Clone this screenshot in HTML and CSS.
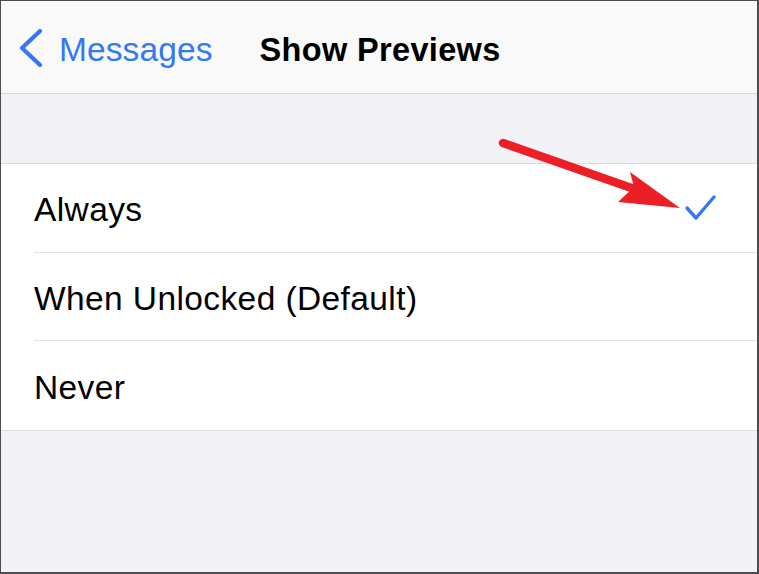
FILE: index.html
```html
<!DOCTYPE html>
<html lang="en">
<head>
<meta charset="utf-8">
<title>Show Previews</title>
<link rel="stylesheet" href="styles.css">
</head>
<body>
<div class="screen">
  <header class="nav">
    <a class="back">
      <svg class="chevron" width="24" height="42" viewBox="0 0 24 42">
        <polyline points="21,3 3,20 21,37" fill="none" stroke="#3478f6" stroke-width="4.2" stroke-linecap="round" stroke-linejoin="round"/>
      </svg>
      <span class="back-label">Messages</span>
    </a>
    <h1 class="title">Show Previews</h1>
  </header>
  <div class="spacer"></div>
  <ul class="list">
    <li class="row"><span class="label">Always</span>
      <svg class="check" width="34" height="30" viewBox="0 0 34 30">
        <polyline points="4,14 13,24 31,3" fill="none" stroke="#3478f6" stroke-width="3.4" stroke-linecap="round" stroke-linejoin="round"/>
      </svg>
    </li>
    <li class="row"><span class="label">When Unlocked (Default)</span></li>
    <li class="row"><span class="label">Never</span></li>
  </ul>
  <div class="footer"></div>
  <svg class="arrow" width="759" height="574" viewBox="0 0 759 574">
    <line x1="503" y1="143" x2="640" y2="191" stroke="#ec1f27" stroke-width="8.5" stroke-linecap="round"/>
    <polygon points="630,172 680,208 618,202 634,187" fill="#ec1f27"/>
  </svg>
</div>
</body>
</html>
```
FILE: styles.css
```css
* { box-sizing: border-box; }
html, body { margin: 0; padding: 0; }
body {
  width: 759px;
  height: 574px;
  overflow: hidden;
  font-family: "Liberation Sans", Arial, sans-serif;
  background: #f2f2f7;
}
.screen {
  position: relative;
  width: 759px;
  height: 574px;
  border-style: solid;
  border-color: #4d4d4f;
  border-width: 1px 2px 2px 1px;
  background: #f2f2f7;
  display: flex;
  flex-direction: column;
}
.nav {
  height: 93px;
  flex: none;
  background: #f9f9f9;
  border-bottom: 1.5px solid #d6d6da;
  display: flex;
  align-items: center;
  padding: 6px 0 0 18px;
}
.back {
  display: flex;
  align-items: center;
  gap: 16px;
  color: #3478f6;
}
.chevron { display: block; margin-top: -3px; }
.back-label {
  font-size: 33.5px;
  letter-spacing: 0.1px;
}
.title {
  margin: 0 0 0 47px;
  font-size: 32.5px;
  font-weight: 700;
  color: #000;
  letter-spacing: 0.35px;
}
.spacer {
  height: 70px;
  flex: none;
  border-bottom: 1.5px solid #dcdce0;
}
.list {
  list-style: none;
  margin: 0;
  padding: 0 0 0 33px;
  background: #fff;
  border-bottom: 1.5px solid #dcdce0;
  flex: none;
}
.row {
  height: 88.7px;
  display: flex;
  align-items: center;
  justify-content: space-between;
  padding-right: 40px;
  border-bottom: 1.5px solid #e2e2e6;
}
.row:last-child { border-bottom: none; }
.label {
  font-size: 33.5px;
  letter-spacing: 0.4px;
  color: #000;
  margin-top: 5px;
}
.check { display: block; margin-top: 2px; }
.footer { flex: 1; }
.arrow {
  position: absolute;
  left: -1px;
  top: -1px;
  pointer-events: none;
}
```
